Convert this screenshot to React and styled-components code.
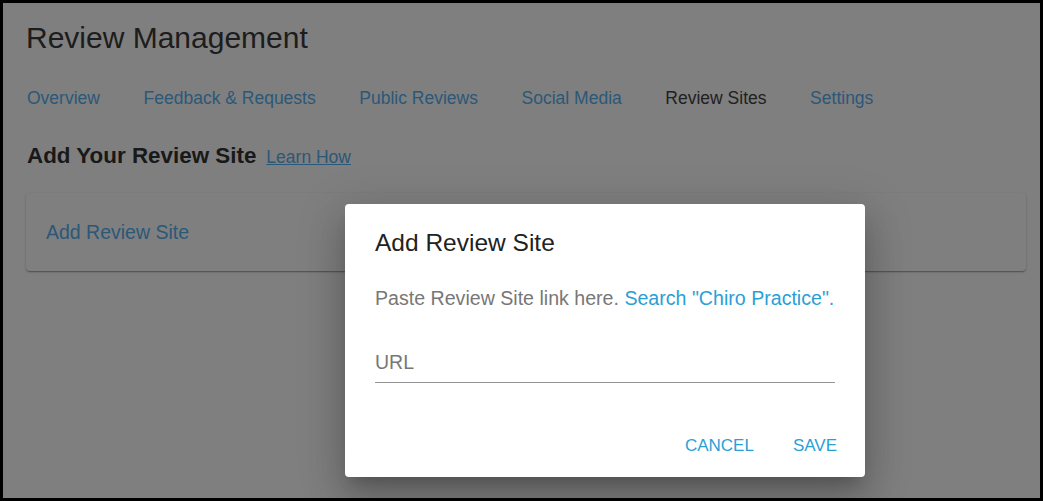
import React from 'react';
import styled, { createGlobalStyle } from 'styled-components';

const GlobalStyle = createGlobalStyle`
  html, body {
    margin: 0;
    padding: 0;
    background: #000;
  }
  body {
    font-family: 'Liberation Sans', Arial, sans-serif;
  }
`;

const Frame = styled.div`
  position: relative;
  width: 1043px;
  height: 501px;
  box-sizing: border-box;
  border: 3px solid #000;
  background: #fff;
  overflow: hidden;
`;

const Page = styled.div`
  padding: 17px 14px 0 23px;
`;

const PageTitle = styled.h1`
  margin: 0;
  font-size: 30px;
  line-height: 36px;
  font-weight: 400;
  color: #3a3a3a;
`;

const Tabs = styled.nav`
  display: flex;
  gap: 43.6px;
  margin-top: 30px;
  padding-left: 1px;
`;

const Tab = styled.a`
  font-size: 17.5px;
  line-height: 24px;
  color: ${({ active }) => (active ? '#424242' : '#58b0f0')};
  text-decoration: none;
  white-space: nowrap;
`;

const SectionHeader = styled.div`
  display: flex;
  align-items: baseline;
  gap: 10px;
  margin-top: 32px;
  padding-left: 1px;
`;

const SectionTitle = styled.h2`
  margin: 0;
  font-size: 22.4px;
  line-height: 28px;
  font-weight: 700;
  color: #333;
`;

const LearnLink = styled.a`
  font-size: 17.5px;
  color: #58b0f0;
  text-decoration: underline;
`;

const Card = styled.div`
  margin-top: 23px;
  width: 1000px;
  box-sizing: border-box;
  padding: 27px 20px;
  background: #fff;
  border-radius: 4px;
  box-shadow: 0 1px 3px rgba(0, 0, 0, 0.2), 0 1px 1px rgba(0, 0, 0, 0.14),
    0 2px 1px -1px rgba(0, 0, 0, 0.12);
`;

const CardLink = styled.a`
  display: block;
  font-size: 19.5px;
  line-height: 24px;
  color: #58b0f0;
  text-decoration: none;
`;

const Backdrop = styled.div`
  position: absolute;
  inset: 0;
  background: rgba(0, 0, 0, 0.5);
`;

const Dialog = styled.div`
  position: absolute;
  left: 342px;
  top: 201px;
  width: 520px;
  height: 273px;
  box-sizing: border-box;
  background: #fff;
  border-radius: 4px;
  display: flex;
  flex-direction: column;
  box-shadow: 0 11px 15px -7px rgba(0, 0, 0, 0.2), 0 24px 38px 3px rgba(0, 0, 0, 0.14),
    0 9px 46px 8px rgba(0, 0, 0, 0.12);
`;

const DialogBody = styled.div`
  padding: 24px 30px 0;
`;

const DialogTitle = styled.h2`
  margin: 0;
  font-size: 24.5px;
  line-height: 30px;
  font-weight: 400;
  color: #222;
`;

const DialogText = styled.p`
  margin: 28px 0 0;
  font-size: 19.6px;
  line-height: 24px;
  color: #777;
  white-space: nowrap;
`;

const TextLink = styled.a`
  color: #2a9fd6;
  text-decoration: none;
`;

const UrlInput = styled.input`
  display: block;
  width: 100%;
  box-sizing: border-box;
  margin-top: 40px;
  padding: 0 0 8px;
  border: none;
  border-bottom: 1px solid #949494;
  outline: none;
  background: transparent;
  font-family: inherit;
  font-size: 19.5px;
  line-height: 24px;
  color: #333;

  &::placeholder {
    color: #777;
  }
`;

const Actions = styled.div`
  margin-top: auto;
  display: flex;
  justify-content: flex-end;
  gap: 19px;
  padding: 0 18px 11px;
`;

const ActionButton = styled.button`
  border: none;
  background: transparent;
  padding: 8px 10px;
  font-family: inherit;
  font-size: 17px;
  line-height: 24px;
  color: #2a9fd6;
  text-transform: uppercase;
  cursor: pointer;
`;

const tabs = ['Overview', 'Feedback & Requests', 'Public Reviews', 'Social Media', 'Review Sites', 'Settings'];

export default function App() {
  return (
    <>
      <GlobalStyle />
      <Frame>
        <Page>
          <PageTitle>Review Management</PageTitle>
          <Tabs>
            {tabs.map((t) => (
              <Tab key={t} active={t === 'Review Sites' ? 1 : 0}>
                {t}
              </Tab>
            ))}
          </Tabs>
          <SectionHeader>
            <SectionTitle>Add Your Review Site</SectionTitle>
            <LearnLink>Learn How</LearnLink>
          </SectionHeader>
          <Card>
            <CardLink>Add Review Site</CardLink>
          </Card>
        </Page>
        <Backdrop />
        <Dialog>
          <DialogBody>
            <DialogTitle>Add Review Site</DialogTitle>
            <DialogText>
              Paste Review Site link here. <TextLink>Search "Chiro Practice".</TextLink>
            </DialogText>
            <UrlInput placeholder="URL" />
          </DialogBody>
          <Actions>
            <ActionButton>Cancel</ActionButton>
            <ActionButton>Save</ActionButton>
          </Actions>
        </Dialog>
      </Frame>
    </>
  );
}
